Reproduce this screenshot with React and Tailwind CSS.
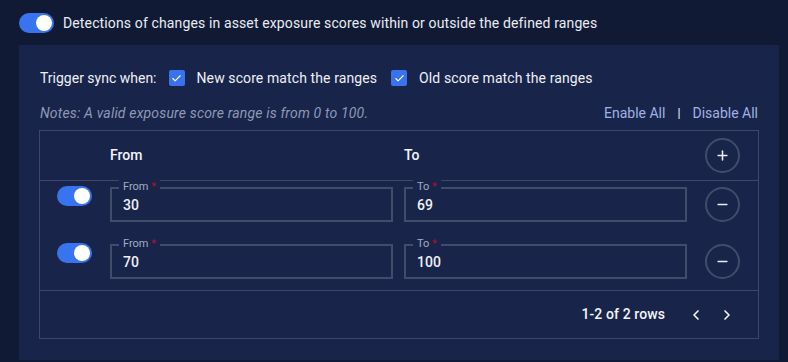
import { Plus, Minus, ChevronLeft, ChevronRight, Check } from 'lucide-react'

const rows = [
  { from: '30', to: '69' },
  { from: '70', to: '100' },
]

function Toggle() {
  return (
    <div className="w-[35px] h-[20px] rounded-full bg-[#3873f0] flex items-center justify-end pr-[2px] shrink-0">
      <div className="w-[16px] h-[16px] rounded-full bg-white" />
    </div>
  )
}

function Box() {
  return (
    <div className="w-[16px] h-[16px] rounded-[2px] bg-[#3a72ee] flex items-center justify-center shrink-0">
      <Check size={11} strokeWidth={2.5} className="text-white" />
    </div>
  )
}

function Field({ label, value }) {
  return (
    <div className="relative h-[35px] flex-1 border-2 border-[#414c6b] flex items-center pl-[11px]">
      <span className="absolute -top-[9px] left-[7px] px-[4px] bg-[#19244b] text-[11px] leading-[14px] text-[#a4acc2]">
        {label} <span className="text-[#b0102a]">*</span>
      </span>
      <span className="text-[14px] font-medium text-[#eef0f5] mt-[1px]">{value}</span>
    </div>
  )
}

function Circle({ children }) {
  return (
    <div className="w-[35px] h-[35px] rounded-full border-2 border-[#414c6b] flex items-center justify-center text-[#e8ebf2]">
      {children}
    </div>
  )
}

export default function App() {
  return (
    <div className="w-[788px] h-[362px] bg-[#111a35] overflow-hidden" style={{ fontFamily: 'Roboto, "Liberation Sans", sans-serif' }}>
      {/* Header */}
      <div className="flex items-center gap-[9px] pl-[19px] pt-[13px] h-[33px]">
        <Toggle />
        <span className="text-[14px] tracking-[0.13px] text-[#e9ecf3]">Detections of changes in asset exposure scores within or outside the defined ranges</span>
      </div>

      {/* Panel */}
      <div className="ml-[19px] mt-[12px] w-[760px] h-[315px] bg-[#19244b] px-[20px] pt-[23px]">
        <div className="flex items-center h-[20px] text-[14px] text-[#eef0f5]">
          <span className="ml-[1px]">Trigger sync when:</span>
          <span className="ml-[12px]"><Box /></span>
          <span className="ml-[12px] tracking-[0.1px]">New score match the ranges</span>
          <span className="ml-[14px]"><Box /></span>
          <span className="ml-[12px] tracking-[0.1px]">Old score match the ranges</span>
        </div>

        <div className="flex items-center justify-between h-[20px] mt-[15px] text-[14px]">
          <span className="italic tracking-[0.17px] text-[#8f99b4] ml-[1px]">Notes: A valid exposure score range is from 0 to 100.</span>
          <div className="flex items-center text-[#9fb2e2] mr-[1px]">
            <span>Enable All</span>
            <span className="mx-[12px] text-[#dfe3ee] font-bold text-[12px]">|</span>
            <span>Disable All</span>
          </div>
        </div>

        {/* Table */}
        <div className="mt-[7px] border border-[#3c4868] h-[209px] flex flex-col">
          <div className="flex items-center h-[50px] border-b border-[#3c4868] text-[14px] font-medium text-[#f2f4f8]">
            <div className="w-[70px]" />
            <div className="w-[294px]">From</div>
            <div className="flex-1">To</div>
            <div className="w-[71px] flex justify-center">
              <Circle><Plus size={15} strokeWidth={2.5} /></Circle>
            </div>
          </div>

          <div className="flex flex-col gap-[22px] pt-[6px] pb-[11px] border-b border-[#3c4868]">
            {rows.map((r, i) => (
              <div key={i} className="flex items-start">
                <div className="w-[70px] pl-[17px] -mt-[1px]"><Toggle /></div>
                <div className="w-[283px] flex"><Field label="From" value={r.from} /></div>
                <div className="w-[11px]" />
                <div className="w-[283px] flex"><Field label="To" value={r.to} /></div>
                <div className="w-[71px] flex justify-center">
                  <Circle><Minus size={15} strokeWidth={2.5} /></Circle>
                </div>
              </div>
            ))}
          </div>

          <div className="flex-1 flex items-center justify-end pr-[23px] text-[14px] font-medium tracking-[0.1px] text-[#f2f4f8]">
            <span>1-2 of 2 rows</span>
            <ChevronLeft size={16} strokeWidth={2.5} className="ml-[23px]" />
            <ChevronRight size={16} strokeWidth={2.5} className="ml-[15px]" />
          </div>
        </div>
      </div>
    </div>
  )
}
